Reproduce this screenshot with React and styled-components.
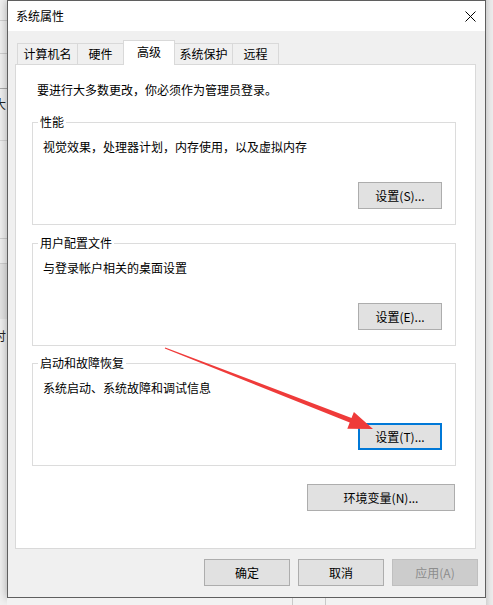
import React from "react";
import styled, { createGlobalStyle } from "styled-components";

const GlobalStyle = createGlobalStyle`
  html, body { margin: 0; padding: 0; }
  body {
    background: #f0f0f0;
    font-family: "Noto Sans CJK SC", "Noto Sans", sans-serif;
    font-size: 12px;
    color: #000;
  }
`;

const Page = styled.div`
  position: relative;
  width: 493px;
  height: 605px;
  display: flex;
  overflow: hidden;
  background: #f0f0f0;
`;

/* slice of the window lying behind the dialog */
const LeftStrip = styled.div`
  width: 7px;
  flex: none;
  display: flex;
  flex-direction: column;
  overflow: hidden;
  background: #f0f0f0;
`;

const Band = styled.div`
  height: ${(p) => p.$h}px;
  flex: none;
  box-sizing: border-box;
  border-bottom: ${(p) => (p.$line ? `1px solid ${p.$line}` : "none")};
  background: ${(p) => p.$bg || "transparent"};
  overflow: hidden;
  white-space: nowrap;
`;

const Clipped = styled.div`
  font-size: 12px;
  line-height: 14px;
  margin-top: ${(p) => p.$top}px;
  text-indent: -6px;
  color: #222;
`;

const MainCol = styled.div`
  width: 479px;
  flex: none;
  display: flex;
  flex-direction: column;
`;

const Window = styled.div`
  width: 479px;
  height: 598px;
  flex: none;
  box-sizing: border-box;
  border: 1px solid #5f5f5f;
  box-shadow: 0 0 9px rgba(0, 0, 0, 0.32);
  background: #f0f0f0;
  display: flex;
  flex-direction: column;
`;

const TitleBar = styled.div`
  height: 30px;
  flex: none;
  background: #fff;
  display: flex;
  align-items: center;
  justify-content: space-between;
  padding: 0 9px 0 8px;
`;

const Title = styled.span`
  font-size: 12px;
  line-height: 16px;
`;

const Body = styled.div`
  flex: 1;
  display: flex;
  flex-direction: column;
  padding: 9px 7px 0 7px;
`;

const TabRow = styled.div`
  height: 24px;
  display: flex;
  align-items: flex-start;
  padding-left: 2px;
`;

const Tab = styled.div`
  position: relative;
  box-sizing: border-box;
  width: ${(p) => p.$w}px;
  height: ${(p) => (p.$active ? 25 : 21)}px;
  margin-top: ${(p) => (p.$active ? 0 : 3)}px;
  margin-left: ${(p) => (p.$first ? 0 : -1)}px;
  border: 1px solid #d9d9d9;
  border-bottom: none;
  background: ${(p) => (p.$active ? "#fff" : "#f0f0f0")};
  z-index: ${(p) => (p.$active ? 1 : 0)};
  text-align: center;
  font-size: 12px;
  line-height: ${(p) => (p.$active ? 22 : 19)}px;
`;

const Panel = styled.div`
  width: 461px;
  height: 485px;
  box-sizing: border-box;
  border: 1px solid #d9d9d9;
  background: #fff;
  padding: 17px 19px 0 16px;
  display: flex;
  flex-direction: column;
`;

const Intro = styled.div`
  line-height: 16px;
  margin-left: 5px;
`;

const Group = styled.div`
  margin-top: ${(p) => p.$mt}px;
  border: 1px solid #dcdcdc;
  display: flex;
  flex-direction: column;
  padding: 0 13px 15px 0;
`;

const Legend = styled.div`
  align-self: flex-start;
  margin: -9px 0 0 5px;
  padding: 0 2px;
  background: #fff;
  line-height: 16px;
`;

const GroupText = styled.div`
  margin: 9px 0 0 10px;
  line-height: 16px;
`;

const ButtonRow = styled.div`
  display: flex;
  justify-content: flex-end;
  margin-top: 27px;
`;

const Button = styled.button`
  box-sizing: border-box;
  width: ${(p) => p.$w || 84}px;
  height: 27px;
  padding: 0;
  margin: 0;
  font-family: inherit;
  font-size: 12px;
  line-height: 16px;
  background: ${(p) => (p.$disabled ? "#cccccc" : "#e1e1e1")};
  color: ${(p) => (p.$disabled ? "#8c8c8c" : "#000")};
  border: ${(p) =>
    p.$focus ? "2px solid #0078d7" : p.$disabled ? "1px solid #bfbfbf" : "1px solid #adadad"};
  border-radius: 0;
`;

const EnvRow = styled.div`
  display: flex;
  justify-content: flex-end;
  margin: 18px 1px 0 0;
`;

const Footer = styled.div`
  display: flex;
  justify-content: flex-end;
  gap: 8px;
  margin-top: 10px;
`;

const RightStrip = styled.div`
  flex: 1;
  background: linear-gradient(to right, #d2d2d2, #e6e6e6 4px, #ececec);
`;

const BottomStrip = styled.div`
  flex: 1;
  display: flex;
  gap: 32px;
  padding-left: 285px;
  background: #f2f2f2;
`;

const Tick = styled.div`
  width: 1px;
  background: #c9c9c9;
`;

const ArrowLayer = styled.svg`
  position: absolute;
  left: 0;
  top: 0;
  pointer-events: none;
`;

const CloseIcon = () => (
  <svg width="11" height="11" viewBox="0 0 11 11">
    <path d="M0.5 0.5 L10.5 10.5 M10.5 0.5 L0.5 10.5" stroke="#000" strokeWidth="1" fill="none" />
  </svg>
);

const tabs = [
  { label: "计算机名", w: 61 },
  { label: "硬件", w: 47 },
  { label: "高级", w: 52, active: true },
  { label: "系统保护", w: 59 },
  { label: "远程", w: 47 },
];

const groups = [
  { title: "性能", text: "视觉效果，处理器计划，内存使用，以及虚拟内存", btn: "设置(S)...", mt: 24 },
  { title: "用户配置文件", text: "与登录帐户相关的桌面设置", btn: "设置(E)...", mt: 18 },
  { title: "启动和故障恢复", text: "系统启动、系统故障和调试信息", btn: "设置(T)...", mt: 17, focus: true },
];

export default function App() {
  return (
    <>
      <GlobalStyle />
      <Page>
        <LeftStrip>
          <Band $h={21} $line="#cfcfcf" />
          <Band $h={33} $line="#cfcfcf" />
          <Band $h={35} $line="#a9a9a9" />
          <Band $h={52} $line="#d6d6d6">
            <Clipped $top={8}>大</Clipped>
          </Band>
          <Band $h={98} $line="#cfcfcf" />
          <Band $h={25} $line="#cfcfcf" />
          <Band $h={55} $bg="#e4e4e4" />
          <Band $h={60}>
            <Clipped $top={10}>讨</Clipped>
          </Band>
        </LeftStrip>
        <MainCol>
          <Window>
            <TitleBar>
              <Title>系统属性</Title>
              <CloseIcon />
            </TitleBar>
            <Body>
              <TabRow>
                {tabs.map((t, i) => (
                  <Tab key={t.label} $w={t.w} $active={t.active} $first={i === 0}>
                    {t.label}
                  </Tab>
                ))}
              </TabRow>
              <Panel>
                <Intro>要进行大多数更改，你必须作为管理员登录。</Intro>
                {groups.map((g) => (
                  <Group key={g.title} $mt={g.mt}>
                    <Legend>{g.title}</Legend>
                    <GroupText>{g.text}</GroupText>
                    <ButtonRow>
                      <Button $focus={g.focus}>{g.btn}</Button>
                    </ButtonRow>
                  </Group>
                ))}
                <EnvRow>
                  <Button $w={148}>环境变量(N)...</Button>
                </EnvRow>
              </Panel>
              <Footer>
                <Button $w={86}>确定</Button>
                <Button $w={86}>取消</Button>
                <Button $w={86} $disabled>应用(A)</Button>
              </Footer>
            </Body>
          </Window>
          <BottomStrip>
            <Tick />
            <Tick />
          </BottomStrip>
        </MainCol>
        <RightStrip />
        <ArrowLayer width="493" height="605" viewBox="0 0 493 605">
          <polygon
            points="165.2,347.4 351.5,418 353.9,411.9 373,429 347.3,428.7 349.7,422.6 164.8,348.6"
            fill="#ef3b3a"
          />
        </ArrowLayer>
      </Page>
    </>
  );
}
